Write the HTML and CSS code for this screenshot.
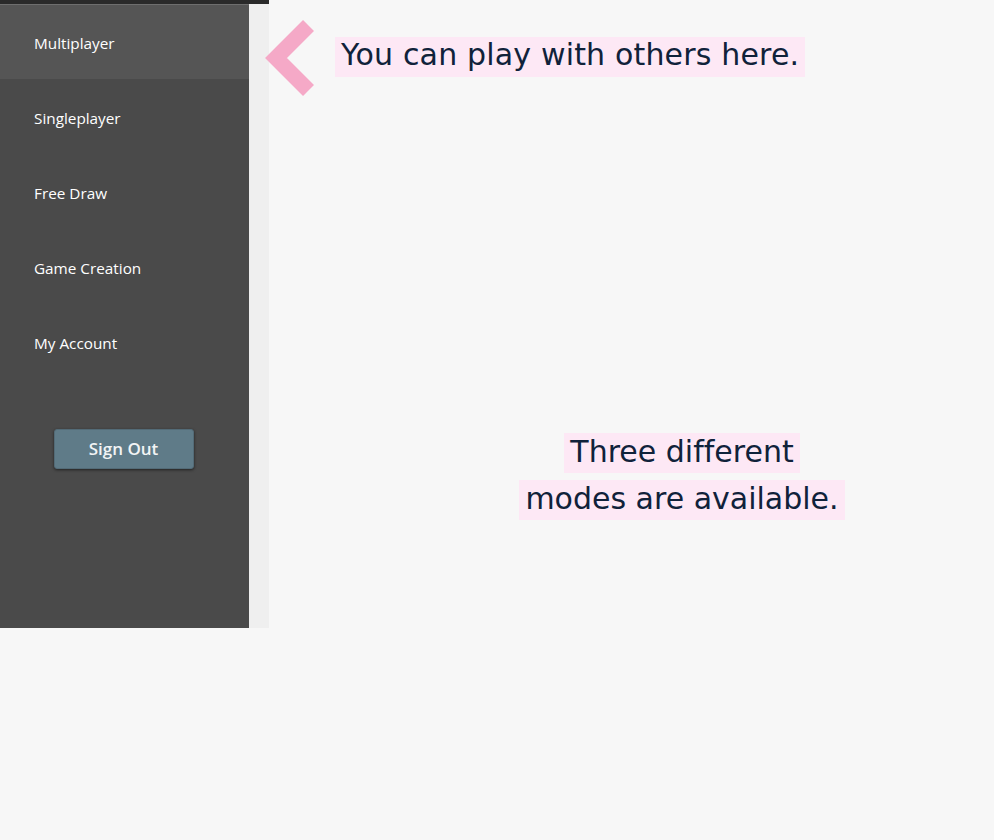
FILE: index.html
```html
<!DOCTYPE html>
<html lang="en">
<head>
<meta charset="utf-8">
<title>Menu tutorial</title>
<link rel="stylesheet" href="styles.css">
</head>
<body>
<div class="app">
  <div class="side-wrap">
    <div class="topbar"></div>
    <div class="side-body">
      <nav class="sidebar">
        <a class="item active">Multiplayer</a>
        <a class="item">Singleplayer</a>
        <a class="item">Free Draw</a>
        <a class="item">Game Creation</a>
        <a class="item">My Account</a>
        <div class="btn-row"><button class="signout">Sign Out</button></div>
      </nav>
      <div class="strip"></div>
    </div>
  </div>
  <main class="main">
    <svg class="chevron" width="60" height="85" viewBox="0 0 60 85">
      <polyline points="48.5,10.5 16,43 48.5,75.5" fill="none" stroke="#f5a9c7" stroke-width="15.5" stroke-linecap="butt" stroke-linejoin="miter"/>
    </svg>
    <div class="tip tip1"><span class="hl">You can play with others here.</span></div>
    <div class="tip tip2"><span class="hl">Three different</span><br><span class="hl">modes are available.</span></div>
  </main>
</div>
</body>
</html>
```
FILE: styles.css
```css
html, body {
  margin: 0;
  padding: 0;
  background: #f7f7f7;
}
body {
  font-family: "Open Sans", "Noto Sans", sans-serif;
}
.app {
  display: flex;
  height: 628px;
}
.side-wrap {
  width: 269px;
  display: flex;
  flex-direction: column;
}
.topbar {
  height: 4px;
  background: #2a2a2a;
}
.side-body {
  flex: 1;
  display: flex;
}
.sidebar {
  width: 249px;
  background: #4a4a4a;
  border-top: 1px solid #6e6e6e;
  display: flex;
  flex-direction: column;
}
.strip {
  width: 20px;
  background: #efefef;
}
.item {
  height: 75px;
  display: flex;
  align-items: center;
  padding-left: 34px;
  padding-top: 2px;
  color: #ffffff;
  font-size: 15.3px;
  box-sizing: border-box;
}
.item.active {
  background: #555555;
  height: 74px;
}
.btn-row {
  display: flex;
  justify-content: center;
  padding-top: 50px;
  padding-right: 2px;
}
.signout {
  width: 140px;
  height: 40px;
  background: #5f7b88;
  border: 1px solid #536b77;
  border-radius: 3px;
  box-shadow: 0 1px 3px rgba(0, 0, 0, 0.55);
  color: #f2f4f5;
  font-family: "Open Sans", "Noto Sans", sans-serif;
  font-weight: 600;
  font-size: 17px;
  padding: 0 0 1px 0;
}
.main {
  flex: 1;
  position: relative;
}
.chevron {
  position: absolute;
  left: -9px;
  top: 15px;
}
.tip {
  position: absolute;
  font-family: "DejaVu Sans", Verdana, sans-serif;
  font-size: 30px;
  font-variant-ligatures: none;
  color: #10223a;
}
.hl {
  background: #fde8f5;
  padding: 0 6px 5px;
}
.tip1 {
  left: 66px;
  top: 32px;
  line-height: 46px;
  letter-spacing: 0.17px;
}
.tip2 {
  left: 213px;
  top: 428px;
  width: 400px;
  text-align: center;
  line-height: 47px;
}
.tip2 .hl {
  padding: 1px 6px 4px;
}
```
